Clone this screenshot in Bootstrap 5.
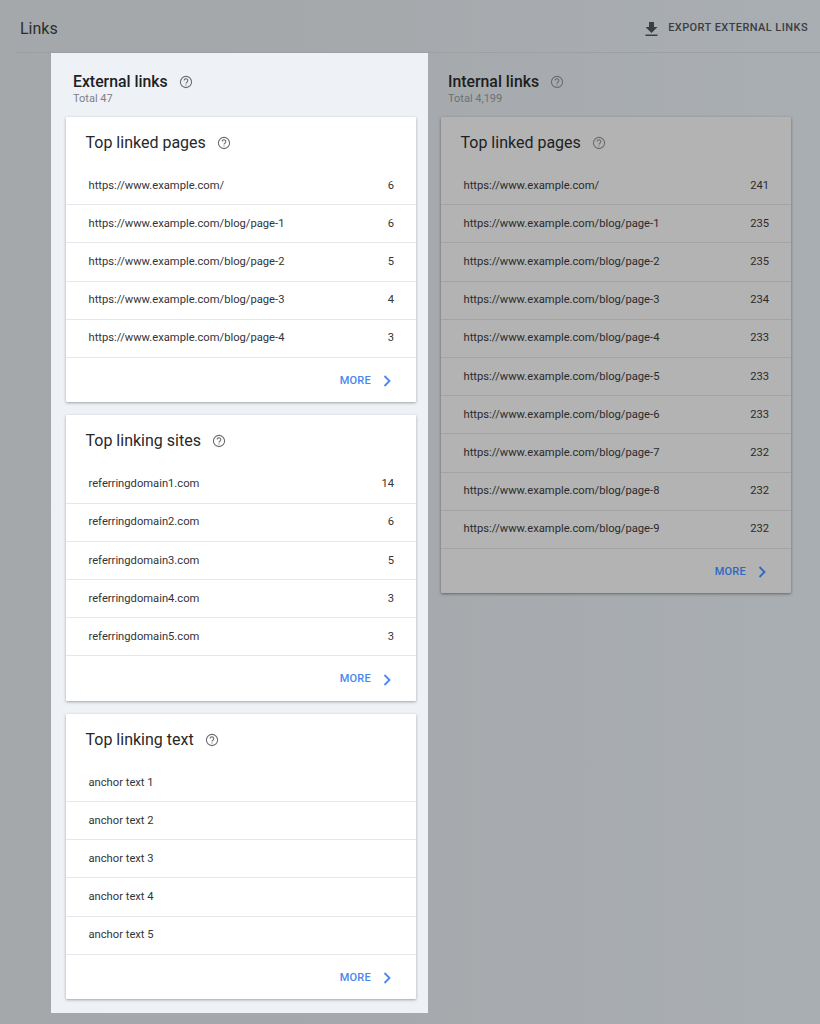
<!DOCTYPE html>
<html lang="en">
<head>
<meta charset="utf-8">
<title>Links</title>
<link href="https://cdn.jsdelivr.net/npm/bootstrap@5.3.0/dist/css/bootstrap.min.css" rel="stylesheet">
<style>
html,body{height:100%}
body{font-family:Roboto,"Liberation Sans",sans-serif;background:linear-gradient(90deg,#a5a8ab 0%,#a6a9ac 45%,#a9aeb3 100%);color:#202124;overflow:hidden}
.top-bar{height:53px;margin-left:16px;padding:0 12px 0 4px;border-bottom:1px solid #9da0a3}
.page-name{font-size:16px;line-height:20px;color:#2c2d2f;margin-top:5px}
.export-act{font-size:11px;font-weight:500;letter-spacing:.43px;color:#3b3d40;gap:10px;margin-top:5px}
.work-area{padding-left:51px}
.ext-panel{width:377px;height:960px;background:#eef2f7;padding:0 12px 0 15px;flex:none}
.int-panel{width:350px;margin-left:13px;flex:none}
.sec-head{height:64px;padding:20px 0 0 7px}
.sec-title{font-size:15.8px;line-height:18px;font-weight:500;color:#202124;gap:11px}
.sec-total{font-size:11px;line-height:12px;color:#7d8084;margin-top:2px}
.int-panel .sec-title{color:#1d1e20}
.int-panel .sec-total{color:#6d7073}
.info-ic{width:14px;height:14px;color:#6a6c6f;flex:none}
.stat-card{border:0;border-radius:1px;box-shadow:0 1px 3px rgba(60,64,67,.45);background:#fff;margin-bottom:13px}
.int-panel .stat-card{background:#b3b3b3;box-shadow:0 1px 3px rgba(40,42,45,.55)}
.stat-title{height:50px;padding:15px 0 0 19.5px;font-size:16px;line-height:22px;color:#27282a;gap:11px}
.int-panel .stat-title{color:#202124}
.stat-list{border-radius:0}
.stat-list>.stat-row,.stat-list>.stat-row:last-child{height:38.2px;padding:1px 22px 0 22.5px;font-size:11.2px;color:#333437;background:transparent;border-color:#e4e6e9;border-width:0 0 1px}
.int-panel .stat-list>.stat-row{color:#2a2b2d;border-color:#a3a4a6}
.stat-foot{height:44.5px;padding:2px 25px 0 0;gap:12px;font-size:11px;font-weight:500;letter-spacing:.25px;color:#4a86f0}
.int-panel .stat-foot{color:#2f67c2}
.chev{width:8px;height:12px;flex:none}
</style>
</head>
<body>
<header class="top-bar d-flex justify-content-between align-items-center">
  <div class="page-name">Links</div>
  <div class="export-act d-flex align-items-center">
    <svg width="13" height="14" viewBox="0 0 13 14" aria-hidden="true"><path fill="currentColor" d="M4 0h5v5h3.500L6.500 11 .5 5H4zM.5 12.500h12V14H.5z"/></svg>
    <span>EXPORT EXTERNAL LINKS</span>
  </div>
</header>
<main class="work-area d-flex align-items-start">
  <section class="ext-panel">
    <div class="sec-head">
      <div class="sec-title d-flex align-items-center">External links
        <svg class="info-ic" viewBox="0 0 14 14"><use href="#help"/></svg></div>
      <div class="sec-total">Total 47</div>
    </div>
    <div class="card stat-card">
      <div class="stat-title d-flex align-items-start">Top linked pages <svg class="info-ic mt-1" viewBox="0 0 14 14"><use href="#help"/></svg></div>
      <ul class="list-group list-group-flush stat-list">
        <li class="list-group-item stat-row d-flex justify-content-between align-items-center"><span>https://www.example.com/</span><span>6</span></li>
        <li class="list-group-item stat-row d-flex justify-content-between align-items-center"><span>https://www.example.com/blog/page-1</span><span>6</span></li>
        <li class="list-group-item stat-row d-flex justify-content-between align-items-center"><span>https://www.example.com/blog/page-2</span><span>5</span></li>
        <li class="list-group-item stat-row d-flex justify-content-between align-items-center"><span>https://www.example.com/blog/page-3</span><span>4</span></li>
        <li class="list-group-item stat-row d-flex justify-content-between align-items-center"><span>https://www.example.com/blog/page-4</span><span>3</span></li>
      </ul>
      <div class="stat-foot d-flex justify-content-end align-items-center">MORE <svg class="chev" viewBox="0 0 8 12"><use href="#chev"/></svg></div>
    </div>
    <div class="card stat-card">
      <div class="stat-title d-flex align-items-start">Top linking sites <svg class="info-ic mt-1" viewBox="0 0 14 14"><use href="#help"/></svg></div>
      <ul class="list-group list-group-flush stat-list">
        <li class="list-group-item stat-row d-flex justify-content-between align-items-center"><span>referringdomain1.com</span><span>14</span></li>
        <li class="list-group-item stat-row d-flex justify-content-between align-items-center"><span>referringdomain2.com</span><span>6</span></li>
        <li class="list-group-item stat-row d-flex justify-content-between align-items-center"><span>referringdomain3.com</span><span>5</span></li>
        <li class="list-group-item stat-row d-flex justify-content-between align-items-center"><span>referringdomain4.com</span><span>3</span></li>
        <li class="list-group-item stat-row d-flex justify-content-between align-items-center"><span>referringdomain5.com</span><span>3</span></li>
      </ul>
      <div class="stat-foot d-flex justify-content-end align-items-center">MORE <svg class="chev" viewBox="0 0 8 12"><use href="#chev"/></svg></div>
    </div>
    <div class="card stat-card">
      <div class="stat-title d-flex align-items-start">Top linking text <svg class="info-ic mt-1" viewBox="0 0 14 14"><use href="#help"/></svg></div>
      <ul class="list-group list-group-flush stat-list">
        <li class="list-group-item stat-row d-flex align-items-center"><span>anchor text 1</span></li>
        <li class="list-group-item stat-row d-flex align-items-center"><span>anchor text 2</span></li>
        <li class="list-group-item stat-row d-flex align-items-center"><span>anchor text 3</span></li>
        <li class="list-group-item stat-row d-flex align-items-center"><span>anchor text 4</span></li>
        <li class="list-group-item stat-row d-flex align-items-center"><span>anchor text 5</span></li>
      </ul>
      <div class="stat-foot d-flex justify-content-end align-items-center">MORE <svg class="chev" viewBox="0 0 8 12"><use href="#chev"/></svg></div>
    </div>
  </section>
  <section class="int-panel">
    <div class="sec-head">
      <div class="sec-title d-flex align-items-center">Internal links
        <svg class="info-ic" viewBox="0 0 14 14"><use href="#help"/></svg></div>
      <div class="sec-total">Total 4,199</div>
    </div>
    <div class="card stat-card">
      <div class="stat-title d-flex align-items-start">Top linked pages <svg class="info-ic mt-1" viewBox="0 0 14 14"><use href="#help"/></svg></div>
      <ul class="list-group list-group-flush stat-list">
        <li class="list-group-item stat-row d-flex justify-content-between align-items-center"><span>https://www.example.com/</span><span>241</span></li>
        <li class="list-group-item stat-row d-flex justify-content-between align-items-center"><span>https://www.example.com/blog/page-1</span><span>235</span></li>
        <li class="list-group-item stat-row d-flex justify-content-between align-items-center"><span>https://www.example.com/blog/page-2</span><span>235</span></li>
        <li class="list-group-item stat-row d-flex justify-content-between align-items-center"><span>https://www.example.com/blog/page-3</span><span>234</span></li>
        <li class="list-group-item stat-row d-flex justify-content-between align-items-center"><span>https://www.example.com/blog/page-4</span><span>233</span></li>
        <li class="list-group-item stat-row d-flex justify-content-between align-items-center"><span>https://www.example.com/blog/page-5</span><span>233</span></li>
        <li class="list-group-item stat-row d-flex justify-content-between align-items-center"><span>https://www.example.com/blog/page-6</span><span>233</span></li>
        <li class="list-group-item stat-row d-flex justify-content-between align-items-center"><span>https://www.example.com/blog/page-7</span><span>232</span></li>
        <li class="list-group-item stat-row d-flex justify-content-between align-items-center"><span>https://www.example.com/blog/page-8</span><span>232</span></li>
        <li class="list-group-item stat-row d-flex justify-content-between align-items-center"><span>https://www.example.com/blog/page-9</span><span>232</span></li>
      </ul>
      <div class="stat-foot d-flex justify-content-end align-items-center">MORE <svg class="chev" viewBox="0 0 8 12"><use href="#chev"/></svg></div>
    </div>
  </section>
</main>
<svg width="0" height="0" class="d-block" aria-hidden="true">
  <defs>
    <g id="help" fill="none" stroke="currentColor">
      <circle cx="7" cy="7" r="5.6" stroke-width="1.1"/>
      <path d="M5.200 5.600a1.800 1.800 0 1 1 2.900 1.400c-.7.500-1.100.8-1.100 1.500" stroke-width="1.100"/>
      <path d="M7 9.400v1.100" stroke-width="1.100"/>
    </g>
    <path id="chev" d="M1.500 1 6.500 6l-5 5" fill="none" stroke="currentColor" stroke-width="1.800"/>
  </defs>
</svg>
<script src="https://cdn.jsdelivr.net/npm/bootstrap@5.3.0/dist/js/bootstrap.bundle.min.js"></script>
</body>
</html>
